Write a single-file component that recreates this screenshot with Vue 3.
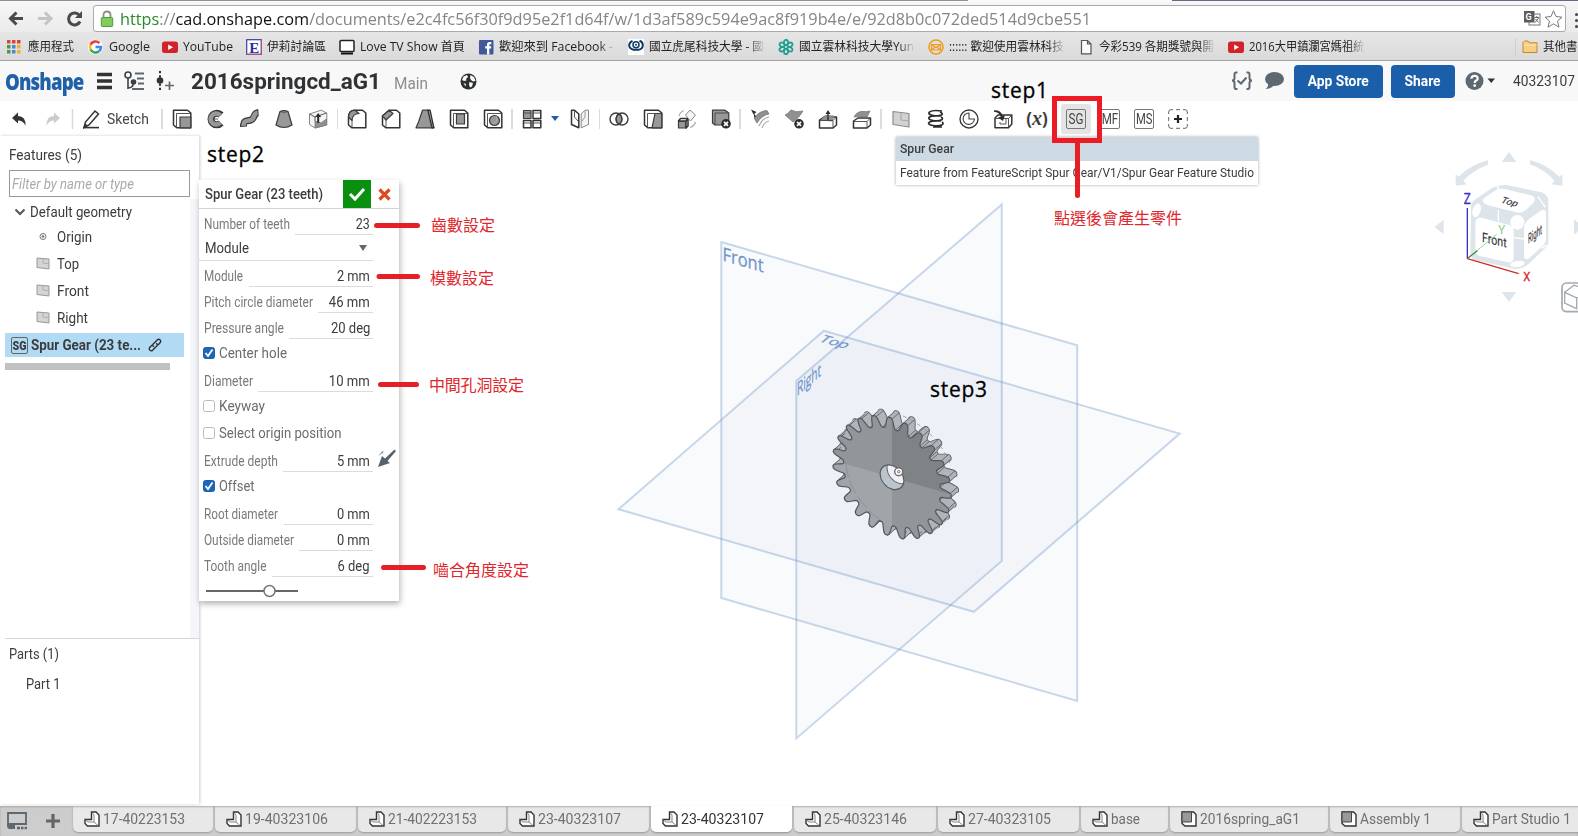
<script setup>
// Condenses or widens a label to a given width: v-fit:left, v-fit:right, or v-fit:center
const vFit = {
  mounted(el, { value, arg }) {
    if (!value) return
    const natural = el.getBoundingClientRect().width
    el.style.transformOrigin = `${arg || 'left'} center`
    el.style.transform = `scaleX(${value / natural})`
  },
}

const bookmarks = [
  { icon: 'apps', text: '應用程式', slot: 81, w: 46 },
  { icon: 'google', text: 'Google', slot: 74, w: 41 },
  { icon: 'tube', text: 'YouTube', slot: 84, w: 50 },
  { icon: 'eyny', text: '伊莉討論區', slot: 93, w: 59 },
  { icon: 'tv', text: 'Love TV Show 首頁', slot: 139, w: 105 },
  { icon: 'fb', text: '歡迎來到 Facebook -', slot: 150, w: 114, fade: true },
  { icon: 'eye', text: '國立虎尾科技大學 - 國', slot: 150, w: 115, fade: true },
  { icon: 'flower', text: '國立雲林科技大學Yun', slot: 150, w: 115, fade: true },
  { icon: 'mail', text: ':::::: 歡迎使用雲林科技', slot: 150, w: 115, fade: true },
  { icon: 'page', text: '今彩539 各期獎號與開', slot: 150, w: 115, fade: true },
  { icon: 'tube', text: '2016大甲鎮瀾宮媽祖統', slot: 150, w: 115.5, fade: true },
]

const box = ['w', 'M1.5 1.2H15.5L18.8 4V18.8H5L1.5 16Z']
const badge = [['f', 'M15 10A4.8 4.8 0 1 0 15 19.6A4.8 4.8 0 1 0 15 10Z'], ['x', 'M13 12.8L17 16.8M17 12.8L13 16.8']]
const tools = [
  { s: [box, ['k', 'M4.5 18.5V4.5H18.5'], ['g', 'M8 8H18.8V18.8H8Z']] },
  { s: [['td', 'M15 6A5.8 5.8 0 1 0 15 14'], ['tg', 'M14.2 6.3A5.5 5.5 0 1 0 14.2 13.7'], ['k', 'M8 10H12']] },
  { s: [['td', 'M3.5 17.8C3 11 7 12 11 11S13 4 18.5 3.6'], ['tg', 'M3.6 16.8C3.4 11 7 12 11 11S13 4 17.6 3.7']] },
  { s: [['g', 'M6 2.5Q10 .5 14 2.5L18 16Q10 21 2 16Z'], ['k', 'M6 2.5Q10 4 14 2.5']] },
  { s: [['wl', 'M1.5 5L13 1.2L18.8 4V16L7 19L1.5 15.5Z'], ['gl', 'M7 12L13 14L18.5 10V16L7 19Z'], ['k', 'M1.5 5L7 8L18.5 4M7 8V12'], ['f', 'M9.2 14V8H7.2L10.2 4L13.2 8H11.2V14Z']] },
  { sep: 1 },
  { s: [['w', 'M1.5 8Q2 1.2 8 1.2H15.5L18.8 4V18.8H5L1.5 16Z'], ['g', 'M1.5 8Q2 1.2 8 1.2L12 4.5Q5.5 4.5 5 11.5Z'], ['k', 'M5 18.5V11']] },
  { s: [['w', 'M1.5 7L8 1.2H15.5L18.8 4V18.8H5L1.5 16Z'], ['g', 'M1.5 7L8 1.2L12 4.5L5 11Z'], ['k', 'M5 18.5V11']] },
  { s: [['g', 'M7.5 1.2H13L18.8 18.8H1L3.5 13Z'], ['w', 'M13 1.2H15L18.8 18.8H17Z']] },
  { s: [box, ['k', 'M4.5 18.5V4.5H18.5'], ['g', 'M7.5 5H15.5V15H7.5Z']] },
  { s: [box, ['k', 'M4.5 18.5V4.5H18.5'], ['g', 'M11.5 6.5A5 5 0 1 0 11.5 16.5A5 5 0 1 0 11.5 6.5Z'], ['l', 'M13 7.5A4 4 0 0 1 9 14']] },
  { sep: 1 },
  { s: [['g', 'M1.5 1.5H9V9.5H1.5Z'], ['w', 'M11 1.5H18.8V9.5H11ZM1.5 11.5H9V18.8H1.5ZM11 11.5H18.8V18.8H11Z'], ['k', 'M1.5 4H9M11 4H18.8M1.5 14H9M11 14H18.8']] },
  { caret: 1 },
  { s: [['w', 'M1.5 1.2H4.5L8.8 5V18.8L1.5 15.5Z'], ['k', 'M4.5 1.2V8L8.8 13'], ['wl', 'M18.5 1.2H15L11.2 5V18.8L18.5 15.5Z'], ['l', 'M15 1.2V8L11.2 13']] },
  { sep: 1 },
  { s: [['n', 'M7 4A6 6 0 1 0 7 16A6 6 0 1 0 7 4Z'], ['n', 'M13 4A6 6 0 1 0 13 16A6 6 0 1 0 13 4Z'], ['g', 'M10 4.9A6 6 0 0 1 10 15.1A6 6 0 0 1 10 4.9Z']] },
  { s: [box, ['g', 'M12 4.5H18.8V18.8H9Z'], ['k', 'M4.5 18.5V4.5H18.5']] },
  { s: [['g', 'M1.5 12H9V19H1.5Z'], ['w', 'M1.5 12L3.5 9.5H11L9 12ZM11 9.5V17L9 19V12Z'], ['wl', 'M13 1L18.5 6L13.5 12L8.5 6Z'], ['l', 'M2 7A8 8 0 0 1 7 1.5M18.5 13A8 8 0 0 1 13 18.5']] },
  { s: [['g', 'M1.5 1.2H14L17.8 4V16H4L1.5 14Z'], ['k', 'M4 16V4H17'], ...badge] },
  { sep: 1 },
  { s: [['gl', 'M4 9Q9 2 17 1.5L19 5Q12 6 7 14Z'], ['l', 'M9 17Q12 9 19 8M12 19Q14 13 19 12'], ['f', 'M1 .5L6.5 3L3.5 5.5ZM4 4L6 8L4 8Z']] },
  { s: [['gl', 'M1 6Q5 4 7 1Q12 4 19 2Q15 9 9 13Z'], ...badge] },
  { s: [['w', 'M1.5 11L6 8H18.5V16L15 19H1.5Z'], ['gl', 'M3 11L7 6.500L16 7L14 12Z'], ['k', 'M1.5 11.5H15V19M15 11.5L18.5 8'], ['f', 'M9.3 11V5H7.5L10 1L12.5 5H10.7V11Z']] },
  { s: [['w', 'M1.5 12L6 9H18.5V16L15 19H1.5Z'], ['gl', 'M2 8Q5 2 11 2.5Q15 3 18 2L15 8Q10 8 6 7.5Z'], ['k', 'M1.5 12.5H15V19M15 12.5L18.5 9']] },
  { sep: 1 },
  { s: [['p', 'M2 2.5L18 4.5V18L2 15.5Z'], ['l', 'M10 4V11L18 12']] },
  { s: [['h', 'M17 2C4 0 0 5 8 6.5S20 5 15 3M16 7C2 6 1 10 8 11.5S20 10 16 8M16 12C3 11 0 15 8 16.5S20 15 17 13M8 18H17']] },
  { s: [['n', 'M10 1A9 9 0 1 0 10 19A9 9 0 1 0 10 1Z'], ['c', 'M10 4V10H15.5A5.7 5.7 0 1 1 10 4Z']] },
  { s: [['w', 'M2 9L5 6H18.8V15L15.5 18.8H2Z'], ['k', 'M2 9.5H15.5V18.5M15.5 9.5L18.8 6'], ['k', 'M7 13V15H13V10'], ['f', 'M1 1.2Q8.500 1 9.500 7L12 6L10 12L5 8.500L7.8 7.8Q6.500 3.5 1 2.8Z']] },
  { fx: 1 },
]
const studios = ['SG', 'MF', 'MS']

const planeRows = ['Top', 'Front', 'Right']

const fields = [
  { label: 'Number of teeth', lw: 86, value: '23', vw: 14, line: 78 },
  { select: 'Module' },
  { label: 'Module', lw: 39, value: '2 mm', vw: 33, line: 124 },
  { label: 'Pitch circle diameter', lw: 109, value: '46 mm', vw: 41, line: 55 },
  { label: 'Pressure angle', lw: 80, value: '20 deg', vw: 39.5, line: 84 },
  { check: 'Center hole', lw: 68, on: true, h: 27 },
  { label: 'Diameter', lw: 49, value: '10 mm', vw: 41, line: 115 },
  { check: 'Keyway', lw: 46, on: false, h: 27 },
  { check: 'Select origin position', lw: 122.5, on: false, h: 27 },
  { label: 'Extrude depth', lw: 74, value: '5 mm', vw: 33, line: 90, flip: true },
  { check: 'Offset', lw: 35.5, on: true, h: 27 },
  { label: 'Root diameter', lw: 74, value: '0 mm', vw: 33, line: 89 },
  { label: 'Outside diameter', lw: 90, value: '0 mm', vw: 33, line: 74 },
  { label: 'Tooth angle', lw: 62.5, value: '6 deg', vw: 32, line: 101 },
]

const tabs = [
  { text: '17-40223153', slot: 142, w: 82 },
  { text: '19-40323106', slot: 143, w: 83 },
  { text: '21-402223153', slot: 150, w: 89 },
  { text: '23-40323107', slot: 143, w: 83 },
  { text: '23-40323107', slot: 143, w: 83, active: true },
  { text: '25-40323146', slot: 144, w: 83 },
  { text: '27-40323105', slot: 143, w: 83 },
  { text: 'base', slot: 89, w: 29 },
  { text: '2016spring_aG1', slot: 160, w: 100, asm: true },
  { text: 'Assembly 1', slot: 132, w: 71, asm: true },
  { text: 'Part Studio 1', slot: 140, w: 79 },
]

// Gear: 23 teeth drawn on the Front plane and extruded along its normal
const cx = 892
const cy = 477.3
const dx = 6.85
const dy = -5.95
const profile = [[-6.5, 48.4], [-5, 50], [-4.1, 53], [-3.2, 56], [-2.3, 58.2], [-1, 59.3], [1, 59.3], [2.3, 58.2], [3.2, 56], [4.1, 53], [5, 50], [6.5, 48.4]]
const pts = []
const ridges = []
for (let i = 0; i < 23; i++) {
  const mid = 79.8 + (i * 360) / 23
  profile.forEach(([a, r], j) => {
    const t = ((mid + a) * Math.PI) / 180
    const p = [cx + r * Math.cos(t), cy + r * (0.291 * Math.cos(t) + Math.sin(t))]
    pts.push(p)
    if (j === 0 || j === 4 || j === 7 || j === 11) ridges.push(p)
  })
}
const f = (n) => n.toFixed(1)
const face = pts.map((p) => `${f(p[0])},${f(p[1])}`).join(' ')
const back = pts.map((p) => `${f(p[0] + dx)},${f(p[1] + dy)}`).join(' ')
const walls = pts.map((p, i) => {
  const q = pts[(i + 1) % pts.length]
  return `${f(p[0])},${f(p[1])} ${f(q[0])},${f(q[1])} ${f(q[0] + dx)},${f(q[1] + dy)} ${f(p[0] + dx)},${f(p[1] + dy)}`
})
const ridgePath = ridges.map((p) => `M${f(p[0])} ${f(p[1])}l${dx} ${dy}`).join('')
</script>

<template>
  <div class="screen">
    <div class="tabstrip"><i class="ts-a"></i><i class="ts-b"></i><i class="ts-c"></i></div>
    <div class="nav">
      <svg class="nav-icons" viewBox="0 0 93 30" width="93" height="30">
        <path d="M23 15.5H11M16.5 9.5L10.5 15.5L16.5 21.5" class="arr" />
        <path d="M38 15.5H50M45 9.5L51 15.5L45 21.5" class="arr off" />
        <path d="M79.5 12.5A6 6 0 1 0 80 18.5" class="arr" />
        <path d="M82 8V15H75Z" fill="#4a4a4a" />
      </svg>
      <div class="address">
        <svg width="14" height="18" viewBox="0 0 14 18" class="lock">
          <path d="M3.5 8V5Q3.5 1.5 7 1.5T10.5 5V8" fill="none" stroke="#8a8f8a" stroke-width="1.8" />
          <rect x="1.3" y="7.5" width="11.4" height="9" rx="1" fill="#7fcd5d" stroke="#4c9a3c" />
        </svg>
        <div class="url-slot"><span v-fit="971" class="url"><b>https</b>://<em>cad.onshape.com</em>/documents/e2c4fc56f30f9d95e2f1d64f/w/1d3af589c594e9ac8f919b4e/e/92d8b0c072ded514d9cbe551</span></div>
        <svg width="42" height="20" viewBox="0 0 42 20" class="addr-icons">
          <rect x="6" y="5" width="11" height="11" fill="#fff" stroke="#777" />
          <rect x="1" y="2" width="10.500" height="11.500" fill="#5c5c5c" />
          <text x="2.500" y="11" font-size="9" font-weight="700" fill="#fff" font-family="Roboto, sans-serif">G</text>
          <path d="M11.500 8.500H16M13.800 7V8.500M12 13.500L15.500 9M12.500 10L15.500 13.500" stroke="#666" fill="none" />
          <path d="M30.500 1.800L33 7.500L39 8.200L34.500 12L36 18.200L30.500 14.800L25 18.200L26.500 12L22 8.200L28 7.500Z" fill="#fff" stroke="#777" />
        </svg>
      </div>
      <div class="dots"><i></i><i></i><i></i></div>
    </div>

    <div class="bookmarks">
      <div v-for="(b, i) in bookmarks" :key="i" class="bm" :style="{ width: b.slot + 'px' }">
        <svg width="16" height="16" viewBox="0 0 16 16">
          <g v-if="b.icon === 'apps'">
            <path d="M0 1h3.500v3.500H0zM5 1h3.500v3.500H5zM10 1h3.500v3.500H10z" fill="#dc4437" />
            <path d="M0 6h3.500v3.500H0z" fill="#3f9b50" /><path d="M5 6h3.500v3.500H5zM5 11h3.500v3.500H5z" fill="#4a87d8" /><path d="M10 6h3.500v3.500H10zM10 11h3.500v3.500H10z" fill="#eeb32b" /><path d="M0 11h3.500v3.500H0z" fill="#3f9b50" />
          </g>
          <g v-else-if="b.icon === 'google'">
            <circle cx="7.500" cy="8" r="7.600" fill="#fff" />
            <g fill="none" stroke-width="2.600">
              <path d="M11.500 4.200A5.500 5.500 0 0 0 2.500 5.800" stroke="#ea4335" /><path d="M2.500 5.800A5.500 5.500 0 0 0 2.600 10.500" stroke="#fbbc05" /><path d="M2.600 10.500A5.500 5.500 0 0 0 11 12.300" stroke="#34a853" /><path d="M11 12.300A5.500 5.500 0 0 0 13 8H7.500" stroke="#4285f4" />
            </g>
          </g>
          <g v-else-if="b.icon === 'tube'"><rect y="2.500" width="16" height="11.500" rx="2.500" fill="#d2232a" /><path d="M6.200 5.500V11L11 8.200Z" fill="#fff" /></g>
          <g v-else-if="b.icon === 'eyny'"><rect x=".7" y=".7" width="14.600" height="14.600" fill="#fff" stroke="#3d3f9c" stroke-width="1.200" /><path d="M15.300 1V15.300H1" stroke="#c8507a" fill="none" /><text x="3.200" y="13.500" font-size="15" font-weight="700" fill="#2b2f9a" font-family="Liberation Serif, serif">E</text></g>
          <g v-else-if="b.icon === 'tv'"><rect x="1" y="1.500" width="14" height="11" rx="1" fill="#fff" stroke="#222" stroke-width="1.500" /><path d="M2 14.500H14" stroke="#111" stroke-width="2" /></g>
          <g v-else-if="b.icon === 'fb'"><rect x="1" y="1" width="14.500" height="14.500" rx="1" fill="#41599b" /><path d="M9 15.500V9.500H7.200V7.300H9V5.500Q9 3 11.500 3H13.300V5.200H12Q11.300 5.200 11.300 6V7.300H13.300L13 9.500H11.300V15.500Z" fill="#fff" /></g>
          <g v-else-if="b.icon === 'eye'"><rect width="16" height="16" fill="#fff" /><path d="M4.500 1.800Q1 3.500 1.200 6.500T5.500 10.800H10.500Q14.600 10 14.800 6.500T11.500 1.800" fill="none" stroke="#0d3a66" stroke-width="2" /><circle cx="8" cy="5.800" r="3" fill="none" stroke="#0d3a66" stroke-width="1.500" /><circle cx="8" cy="5.800" r="1" fill="#0d3a66" /></g>
          <g v-else-if="b.icon === 'flower'" fill="none" stroke="#1fa08e" stroke-width="1.800"><ellipse v-for="n in 6" :key="n" cx="8" cy="3.500" rx="2.100" ry="2.700" :transform="`rotate(${n * 60} 8 8)`" /></g>
          <g v-else-if="b.icon === 'mail'" fill="none" stroke="#f09a1d" stroke-width="1.500"><circle cx="8" cy="8" r="7" /><path d="M3.500 5.500H12.500V11H3.500ZM3.500 5.500L8 8.500L12.500 5.500M3.500 11L7 8M12.500 11L9 8" stroke-width="1.200" /></g>
          <g v-else><path d="M3.500 1.500H9.500L13 5V14.800H3.500ZM9.500 1.500V5H13" fill="#fafafa" stroke="#555" stroke-width="1.200" /></g>
        </svg>
        <div class="bm-clip" :class="{ fade: b.fade }"><span v-fit="b.w">{{ b.text }}</span></div>
      </div>
      <div class="bm-other">
        <svg width="16" height="14" viewBox="0 0 16 14"><path d="M1 12.500V2.500L2.500 1H6L7.500 2.800H15V12.500Z" fill="#f8cf80" stroke="#b98a35" /><path d="M1.500 5H14.500" stroke="#fde7b5" /></svg>
        <span v-fit="34.500">其他書</span>
      </div>
    </div>

    <header class="header">
      <div class="logo"><span v-fit="78.500">Onshape</span></div>
      <svg class="head-icons" width="100" height="24" viewBox="0 0 100 24">
        <path d="M0 5.500H15M0 12H15M0 18.500H15" stroke="#333" stroke-width="3.300" />
        <g fill="none" stroke="#3c4043" stroke-width="1.600"><circle cx="31" cy="6" r="3" /><circle cx="36.500" cy="13" r="2" fill="#3c4043" /><path d="M31 9V20M31 19Q36 19 36.500 14" /></g>
        <path d="M38 4.500H47M40 9.500H47M41 14.500H47M35 20H47" stroke="#5d6870" stroke-width="1.800" />
        <path d="M63 2V22" stroke="#333" stroke-width="2" stroke-dasharray="2.200 2" /><circle cx="63" cy="11.500" r="3.300" fill="#333" /><path d="M68 16.500H77M72.500 12.500V21" stroke="#5d6870" stroke-width="1.700" />
      </svg>
      <div class="title"><span v-fit="190">2016springcd_aG1</span></div>
      <div class="branch"><span v-fit="34">Main</span></div>
      <svg class="globe" width="17" height="17" viewBox="0 0 17 17"><circle cx="8.500" cy="8.500" r="8" fill="#2d3033" /><path d="M3.500 3.500L7 2L8 4L6 6L6.500 7.500L4 8L2 7ZM10.500 2L14 4L15.500 8L13 8.500L11 7L10 5ZM9.500 9L13 10L12 13.500L10 14.500L9 11.500ZM3.500 10L6 11L5.500 13.500Z" fill="#f8f8f8" /></svg>
      <div class="head-right">
        <svg width="54" height="22" viewBox="0 0 54 22">
          <path d="M6.500 2.500H5Q3.500 2.500 3.500 4.500V8Q3.500 10.500 1 10.500Q3.500 10.500 3.500 13V17Q3.500 19 5 19H6.500M15.500 2.500H17Q18.500 2.500 18.500 4.500V8Q18.500 10.500 21 10.500Q18.500 10.500 18.500 13V17Q18.500 19 17 19H15.500" fill="none" stroke="#5d6870" stroke-width="2" /><path d="M6.500 10.500L10 13.500L15.500 7.500" fill="none" stroke="#5d6870" stroke-width="2" />
          <ellipse cx="43.500" cy="9" rx="9.500" ry="7" fill="#5d6870" /><path d="M37 13Q38 17 34.500 19Q40 19 43 15Z" fill="#5d6870" />
        </svg>
        <button class="btn app"><span v-fit:center="61">App Store</span></button>
        <button class="btn share"><span v-fit:center="36">Share</span></button>
        <svg class="help" width="31" height="20" viewBox="0 0 31 20"><circle cx="9.500" cy="10" r="9" fill="#5d6870" /><path d="M6.300 7.800Q6.500 4.800 9.600 4.800T12.700 7.500Q12.700 9 10.800 9.800Q9.700 10.400 9.700 12" fill="none" stroke="#fff" stroke-width="2.200" /><circle cx="9.700" cy="14.600" r="1.400" fill="#fff" /><path d="M22.500 7.500H30L26.300 12Z" fill="#333" /></svg>
        <div class="user"><span v-fit="62">40323107</span></div>
      </div>
    </header>

    <div class="toolbar">
      <svg width="78" height="30" viewBox="0 0 78 30" class="undo">
        <path d="M12 14L18 8.500V12Q26 12 25.500 22Q23.500 16.500 18 16.500V19.500Z" fill="#333" />
        <path d="M60 14L54 8.500V12Q46 12 46.500 22Q48.500 16.500 54 16.500V19.500Z" fill="#ccc" />
        <path d="M72.500 5V25" stroke="#d8d8d8" stroke-width="1.500" />
      </svg>
      <svg width="24" height="20" viewBox="0 0 24 20"><path d="M6 18.500L7.500 13L17 2L20.500 5L11 16Z" fill="#fff" stroke="#333" stroke-width="1.500" /><path d="M5 18.600H21" stroke="#333" stroke-width="1.600" /><path d="M6 18.500L7.500 14.500L9.500 16.500Z" fill="#333" /></svg>
      <div class="sketch"><span v-fit="42">Sketch</span></div>
      <i class="sep"></i>
      <template v-for="(t, i) in tools" :key="i">
        <i v-if="t.sep" class="sep"></i>
        <i v-else-if="t.caret" class="caret"></i>
        <div v-else-if="t.fx" class="tool fx">(<em>x</em>)</div>
        <div v-else class="tool">
          <svg width="20" height="20" viewBox="0 0 20 20"><path v-for="(p, j) in t.s" :key="j" :class="'s-' + p[0]" :d="p[1]" /></svg>
        </div>
      </template>
      <div class="customs">
        <div v-for="(s, i) in studios" :key="s" class="tool" :class="{ hover: i === 0 }"><b class="feat"><span v-fit:center="s === 'SG' ? 15 : 16.500">{{ s }}</span></b></div>
        <div class="tool"><svg width="20" height="20" viewBox="0 0 20 20"><path d="M.7 5V3Q.7 .7 3 .7H5M8 .7H12M15 .7H17Q19.300 .7 19.300 3V5M19.300 8V12M19.300 15V17Q19.300 19.300 17 19.300H15M12 19.300H8M5 19.300H3Q.7 19.300 .7 17V15M.7 12V8" fill="none" stroke="#666" /><path d="M6 10H14M10 6V14" stroke="#222" stroke-width="2.200" /></svg></div>
      </div>
    </div>

    <main class="work">
      <aside class="side">
        <div class="side-main">
          <div class="side-title"><span v-fit="73">Features (5)</span></div>
          <div class="filter"><span v-fit="122">Filter by name or type</span></div>
          <div class="tree-head">
            <svg width="12" height="8" viewBox="0 0 12 8"><path d="M1.500 1.500L6 6L10.500 1.500" fill="none" stroke="#555" stroke-width="2" /></svg>
            <span v-fit="102">Default geometry</span>
          </div>
          <div class="tree-row"><svg width="14" height="14" viewBox="0 0 14 14"><circle cx="7" cy="6.500" r="3" fill="none" stroke="#777" /><circle cx="7" cy="6.500" r="1.300" fill="#777" /></svg><span v-fit="35">Origin</span></div>
          <div v-for="(p, i) in planeRows" :key="p" class="tree-row">
            <svg width="14" height="13" viewBox="0 0 14 13"><path d="M1 1L13 2V12L1 10.500Z" fill="#d4d4d4" stroke="#999" /><path d="M7 1.500V6L13 6.800" fill="none" stroke="#b0b0b0" /></svg>
            <span v-fit="[22, 32, 31][i]">{{ p }}</span>
          </div>
          <div class="tree-sel">
            <b class="mini"><span v-fit:center="14">SG</span></b>
            <div class="sel-text"><span v-fit="110">Spur Gear (23 te...</span></div>
            <svg width="14" height="14" viewBox="0 0 14 14" fill="none" stroke="#333" stroke-width="1.400" stroke-linejoin="round"><path d="M5.800 8.800L4.600 7.600Q4.500 6.800 5.200 6L9.500 1.700Q10.800 .8 12.200 2Q13.200 3.300 12.300 4.600L10 7" /><path d="M8.200 5.200L9.400 6.400Q9.500 7.200 8.800 8L4.500 12.300Q3.200 13.200 1.800 12Q.8 10.700 1.700 9.400L4 7" /></svg>
          </div>
          <div class="rollbar"></div>
        </div>
        <div class="parts">
          <div class="side-title"><span v-fit="50">Parts (1)</span></div>
          <div class="part"><span v-fit="34.500">Part 1</span></div>
        </div>
      </aside>

      <section class="dialog">
        <div class="dlg-head">
          <div class="dlg-title"><span v-fit="118">Spur Gear (23 teeth)</span></div>
          <div class="ok"><svg width="18" height="16" viewBox="0 0 18 16"><path d="M2 8L7 13L16 3" fill="none" stroke="#fff" stroke-width="3" /></svg></div>
          <svg class="cancel" width="13" height="13" viewBox="0 0 13 13"><path d="M1.500 1.500L11.500 11.500M11.500 1.500L1.500 11.500" stroke="#dc4a22" stroke-width="3.200" /></svg>
        </div>
        <template v-for="(r, i) in fields" :key="i">
          <div v-if="r.select" class="select"><span v-fit="44">{{ r.select }}</span><i></i></div>
          <div v-else-if="r.check" class="check" :style="{ height: r.h + 'px' }">
            <svg width="12" height="12" viewBox="0 0 12 12"><rect x=".5" y=".5" width="11" height="11" rx="2" :fill="r.on ? '#1d67b8' : '#fff'" :stroke="r.on ? '#1d5fa8' : '#bbb'" /><path v-if="r.on" d="M2.500 6L5 9L9.500 2.500" fill="none" stroke="#fff" stroke-width="1.800" /></svg>
            <span v-fit="r.lw">{{ r.check }}</span>
          </div>
          <div v-else class="field">
            <div class="lab"><span v-fit="r.lw">{{ r.label }}</span></div>
            <div class="val" :style="{ width: r.line + 'px' }"><span v-fit:right="r.vw">{{ r.value }}</span></div>
            <svg v-if="r.flip" class="flip" width="20" height="20" viewBox="0 0 20 20"><path d="M1 19L5 8L8 10.500L17.500 1.500L19 3L10.500 13L13 15Z" fill="#56636c" /><path d="M1 8L6 2.500L6.500 4.500Z" fill="#8b959c" /></svg>
          </div>
        </template>
        <svg class="slider" width="100" height="24" viewBox="0 0 100 24"><path d="M3 14H95" stroke="#666" stroke-width="2" /><circle cx="66.500" cy="14" r="5.500" fill="#fff" stroke="#777" stroke-width="1.500" /></svg>
      </section>
    </main>

    <footer class="tabs">
      <div class="tab-tools">
        <svg width="72" height="30" viewBox="0 0 72 30"><path d="M8 7H26V18H8Z" fill="none" stroke="#5d6870" stroke-width="1.800" /><path d="M7 17.500H27V19H15V23H9Q7 22 7 20Z" fill="#5d6870" /><path d="M17 22H20M21 22H23.500M24.500 22H27" stroke="#5d6870" stroke-width="2.500" /><path d="M46 15H60M53 8V22" stroke="#666" stroke-width="3.200" /></svg>
      </div>
      <div v-for="(t, i) in tabs" :key="i" class="tab" :class="{ active: t.active }" :style="{ width: t.slot - 2 + 'px' }">
        <svg width="16" height="16" viewBox="0 0 16 16">
          <template v-if="t.asm"><path d="M1 1H12.500L15 3.500V15H4L1 12.500Z" fill="#fff" stroke="#333" stroke-width="1.400" /><path d="M1 1H10.500V11H1Z" fill="#999" stroke="#444" /></template>
          <template v-else><path d="M7.500 1H12L15 4V15H3.500L1 12.500V8.500H7.500Z" fill="#fff" stroke="#333" stroke-width="1.400" /><path d="M1.500 9L4 11H10V4L8 1.500M10 11L14 14.500" fill="none" stroke="#777" stroke-width=".9" /></template>
        </svg>
        <span v-fit="t.w">{{ t.text }}</span>
      </div>
    </footer>

    <svg class="scene" width="1578" height="836" viewBox="0 0 1578 836">
      <defs>
        <clipPath id="gear-face"><polygon :points="face" /></clipPath>
        <clipPath id="gear-hole"><ellipse rx="11.850" ry="11.850" transform="matrix(1 .291 0 1 892 477.300)" /></clipPath>
      </defs>
      <g class="plane">
        <path d="M721.300 242L1077.200 345.300V700.900L721.300 598Z" />
        <path d="M1001.800 204.500V560.900L796.300 738.400V380.900Z" />
        <path d="M823.900 330.700L1179.800 433.600L973.900 611.800L618.400 509.300Z" />
      </g>
      <g class="plane-names">
        <text transform="matrix(1 .291 0 1 722.500 260.500)" font-size="19" textLength="41" lengthAdjust="spacingAndGlyphs">Front</text>
        <text transform="matrix(.97 .28 -.6 .5 818 341)" font-size="17" textLength="28" lengthAdjust="spacingAndGlyphs">Top</text>
        <text transform="matrix(1 -.859 0 1 797 396)" font-size="18" textLength="24" lengthAdjust="spacingAndGlyphs">Right</text>
      </g>
      <polygon :points="back" fill="#a9b0b5" stroke="#4a5054" stroke-width="1.800" stroke-linejoin="round" />
      <polygon v-for="(w, i) in walls" :key="i" :points="w" fill="#b0b7bc" stroke="#b0b7bc" stroke-width=".3" />
      <path :d="ridgePath" stroke="#5a6064" stroke-width=".9" />
      <g clip-path="url(#gear-face)">
        <rect x="820" y="400" width="150" height="160" fill="#929699" />
        <path d="M892 477.300V400H970V500Z" fill="#7f8385" />
        <path d="M892 477.300V560H820V456.350Z" fill="#9fa5a9" />
      </g>
      <polygon :points="face" fill="none" stroke="#54595d" stroke-width="1.200" stroke-linejoin="round" />
      <path d="M846 463Q848 495 880 520" fill="none" stroke="#878d91" stroke-width=".8" stroke-dasharray="14 4" />
      <path d="M903 416Q938 432 951 466" fill="none" stroke="#8d9398" stroke-width=".8" stroke-dasharray="4 4" />
      <g clip-path="url(#gear-hole)">
        <rect x="870" y="455" width="45" height="45" fill="#bcc5cc" />
        <ellipse rx="11.850" ry="11.850" transform="matrix(1 .291 0 1 898.850 471.350)" fill="#eef1f6" stroke="#666c70" />
      </g>
      <ellipse rx="11.850" ry="11.850" transform="matrix(1 .291 0 1 892 477.300)" fill="none" stroke="#54595d" stroke-width="1.100" />
      <circle cx="898.700" cy="471.700" r="4" fill="#fff" stroke="#70686a" stroke-width="1.400" /><circle cx="898.700" cy="471.700" r="1.200" fill="none" stroke="#70686a" />
    </svg>

    <svg class="cube" width="178" height="190" viewBox="0 0 534 570">
      <g fill="#dde4ea">
        <path d="M327 66L349 96H305ZM327 515L305 486H349ZM103 291L131 270V312ZM522 268L550 291L522 314Z" />
        <path d="M264 91V104Q220 120 190 152L200 163L167 167V132L176 140Q212 104 264 91ZM390 90V103Q434 119 464 152L455 163L487 167V132L478 140Q442 104 390 90Z" />
        <path d="M213 235Q212 218 226 208L275 175Q290 166 320 165L420 186Q440 190 445 208V335Q446 345 430 360L388 400Q368 418 345 417L225 390Q212 386 211 370Z" />
      </g>
      <g fill="#fff">
        <path d="M252 204L288 180Q298 174 315 177L392 196Q412 203 400 218L378 240Q364 252 345 246L265 226Q240 218 252 204Z" />
        <path d="M226 280Q226 262 243 263L325 284Q341 288 341 303V382Q341 400 325 397L243 379Q226 375 226 360Z" />
        <path d="M372 295Q374 275 388 266L422 242Q438 234 438 250V328Q438 340 428 348L388 384Q372 394 372 376Z" />
        <ellipse cx="352" cy="277" rx="21" ry="22" /><ellipse cx="230" cy="241" rx="12" ry="21" transform="rotate(18 230 241)" /><ellipse cx="352" cy="402" rx="22" ry="9" transform="rotate(-8 352 402)" />
      </g>
      <path d="M295 240V274M340 322L372 327M414 200L436 232M290 167L300 182M425 355L440 345" stroke="#fff" stroke-width="4" />
      <g font-family="Roboto, sans-serif" fill="#333" stroke="#333" stroke-width=".4">
        <text transform="matrix(1 .24 0 1 246 335)" font-size="40" textLength="74" lengthAdjust="spacingAndGlyphs">Front</text>
        <text transform="matrix(.96 .26 -.5 .72 300 217)" font-size="32" textLength="50" lengthAdjust="spacingAndGlyphs">Top</text>
        <text transform="matrix(1 -.72 0 1 384 341)" font-size="41" textLength="42" lengthAdjust="spacingAndGlyphs">Right</text>
      </g>
      <path d="M202 386V234" stroke="#3a32c8" stroke-width="4" /><path d="M202 386L356 431" stroke="#d22b2b" stroke-width="4" /><path d="M204 384L290 313" stroke="#9ad69a" stroke-width="3" /><path d="M204 384L232 362" stroke="#2f8f2f" stroke-width="3.500" />
      <g font-family="Roboto, sans-serif" font-size="42">
        <text x="191" y="223" fill="#3a32c8" stroke="#3a32c8" textLength="21" lengthAdjust="spacingAndGlyphs">Z</text><text x="294" y="311" fill="#8fd08f" font-size="38" textLength="22" lengthAdjust="spacingAndGlyphs">Y</text><text x="370" y="452" fill="#d22b2b" stroke="#d22b2b" font-size="38" textLength="21" lengthAdjust="spacingAndGlyphs">X</text>
      </g>
      <g fill="#fff" stroke="#a3a9ae" stroke-width="5"><rect x="486" y="459" width="90" height="86" rx="14" /><path d="M494 487L522 466L560 476M494 487L530 504V536L494 519ZM530 504L560 490" stroke-width="4" /></g>
    </svg>

    <div class="tooltip">
      <div class="tt-head"><span v-fit="54">Spur Gear</span></div>
      <div class="tt-body"><span v-fit="354">Feature from FeatureScript Spur Gear/V1/Spur Gear Feature Studio</span></div>
    </div>

    <svg class="scene notes" width="1578" height="836" viewBox="0 0 1578 836">
      <rect x="1054.500" y="98.500" width="45" height="42" fill="none" stroke="#ed1c24" stroke-width="5" />
      <g stroke="#e61f27" stroke-width="5" stroke-linecap="round">
        <path d="M1077.500 143V195.500" /><path d="M376.500 225.500H417.500M379 276.500H417.500M380.500 384.500H416.500M383.500 567.500H423.500" />
      </g>
      <g class="step">
        <text x="991" y="97.500" textLength="57">step1</text><text x="207" y="161.500" textLength="57">step2</text><text x="930" y="396.500" textLength="57">step3</text>
      </g>
      <g class="zh">
        <text x="1054" y="224" textLength="128">點選後會產生零件</text>
        <text x="431" y="231" textLength="64">齒數設定</text>
        <text x="430" y="284" textLength="64">模數設定</text>
        <text x="429" y="391" textLength="95">中間孔洞設定</text>
        <text x="433" y="576" textLength="96">嚙合角度設定</text>
      </g>
    </svg>
  </div>
</template>

<style>
body { margin: 0; overflow: hidden; background: #fff; }
</style>

<style scoped>
.screen { position: relative; width: 1578px; height: 836px; display: flex; flex-direction: column; overflow: hidden; background: #fff; font-family: Roboto, "Liberation Sans", "Noto Sans CJK TC", sans-serif; color: #3c3c3c; }
.screen * { box-sizing: border-box; }
svg { display: block; flex: none; }
span { display: inline-block; white-space: nowrap; flex: none; }
i { display: block; flex: none; }
.tabstrip { display: flex; height: 2px; background: #fafafa; flex: none; }
.ts-a { width: 968px; height: 1px; background: #8f8f9b; }
.ts-b { width: 204px; }
.ts-c { width: 406px; height: 1px; background: #666a80; }
.nav { height: 30px; flex: none; display: flex; background: linear-gradient(#f6f6f6, #ebebeb); }
.nav-icons { margin-top: 1px; }
.arr { fill: none; stroke: #4a4a4a; stroke-width: 3; }
.off { stroke: #c4c4c4; }
.address { width: 1474px; height: 27px; margin-top: 3px; background: #fff; border: 1px solid #aaa; border-radius: 3px; display: flex; align-items: center; }
.lock { margin-left: 6px; }
.url-slot { width: 1403px; margin-left: 6px; padding-top: 1px; }
.url { font-family: "Open Sans", "Noto Sans", sans-serif; font-size: 16.500px; line-height: 24px; color: #858585; }
.url b { font-weight: 400; color: #2a8a2a; }
.url em { font-style: normal; color: #111; }
.dots { margin: 11px 0 0 9px; display: flex; flex-direction: column; gap: 3px; }
.dots i { width: 3px; height: 3px; background: #444; border-radius: 50%; }
.bookmarks { height: 29px; flex: none; display: flex; align-items: center; padding: 1px 0 0 7px; background: linear-gradient(#e6e6e6, #dadada); border-bottom: 1px solid #a2a2a2; font-family: "Open Sans", "Noto Sans CJK TC", sans-serif; font-size: 12px; line-height: 18px; color: #222; }
.bm { display: flex; align-items: center; gap: 5px; flex: none; }
.bm-clip { overflow: hidden; width: 120px; flex: none; }
.fade { width: 116px; mask-image: linear-gradient(90deg, #000 100px, transparent 116px); }
.bm-other { margin-left: 137px; padding-left: 6px; border-left: 1px solid #cfcfcf; display: flex; align-items: center; gap: 5px; flex: none; }

.header { height: 40px; flex: none; display: flex; align-items: center; background: #f8f8f8; }
.header > * { flex: none; }
.logo { width: 91px; padding-left: 5px; font-family: "Open Sans", sans-serif; font-weight: 800; font-size: 22px; line-height: 30px; letter-spacing: -1px; color: #1f61a9; }
.head-icons { margin-left: 6px; }
.title { margin-left: -6px; width: 203px; font-weight: 700; font-size: 22px; color: #303336; }
.branch { width: 66px; font-size: 16px; color: #8c8c8c; padding-top: 4px; }
.head-right { margin-left: 754px; display: flex; align-items: center; }
.btn { height: 33px; border: 0; border-radius: 4px; padding: 0; background: #1b5faa; color: #fff; font: 700 15px Roboto, sans-serif; display: flex; align-items: center; justify-content: center; flex: none; }
.app { width: 89px; margin-left: 9px; }
.share { width: 64px; margin-left: 8px; }
.help { margin-left: 10px; }
.user { margin-left: 17px; font-size: 15px; }

.toolbar { height: 35px; flex: none; display: flex; align-items: center; background: #fff; }
.sketch { width: 57px; margin-left: 5px; font-size: 15px; color: #444; }
.sep { width: 5px; height: 20px; background: linear-gradient(90deg, transparent 1.500px, #dcdcdc 1.500px 3px, transparent 3px); }
.sketch + .sep { margin-left: -4px; }
.tool { width: 34px; height: 30px; flex: none; display: flex; align-items: center; justify-content: center; }
.caret { width: 14px; display: flex; padding-left: 2px; }
.caret::after { content: ""; border: 4px solid transparent; border-top: 5px solid #1d5fa8; border-bottom: 0; }
.tool path { stroke-linejoin: round; }
.s-k { fill: none; stroke: #444; stroke-width: .9; }
.s-w { fill: #fff; stroke: #333; stroke-width: 1.500; }
.s-g { fill: #989898; stroke: #3c3c3c; stroke-width: 1.200; }
.s-f { fill: #2c2c2c; }
.s-x { fill: none; stroke: #fff; stroke-width: 1.700; }
.s-l { fill: none; stroke: #aaa; stroke-width: 1.200; }
.s-wl { fill: #f4f4f4; stroke: #888; stroke-width: 1; }
.s-gl { fill: #909090; stroke: #777; stroke-width: .8; }
.s-p { fill: #d2d2d2; stroke: #8c8c8c; stroke-width: 1.200; }
.s-n { fill: none; stroke: #3c3c3c; stroke-width: 1.400; }
.s-c { fill: none; stroke: #444; stroke-width: 1.100; }
.s-h { fill: none; stroke: #2c2c2c; stroke-width: 1.700; }
.s-td { fill: none; stroke: #3a3a3a; stroke-width: 7; }
.s-tg { fill: none; stroke: #989898; stroke-width: 4.600; }
.fx { font: 700 17px "Open Sans", sans-serif; }
.fx em { font-family: "Liberation Serif", serif; font-size: 20px; }
.customs { display: flex; margin-left: 5px; }
.hover { position: relative; }
.hover::before { content: ""; position: absolute; left: 2px; top: 0; width: 30px; height: 30px; background: #e4e4e4; border-radius: 3px; }
.feat { position: relative; width: 20px; height: 20px; border: 1px solid #777; border-radius: 2px; font-weight: 400; font-size: 14px; line-height: 18px; display: flex; justify-content: center; color: #444; }

.work { flex: 1; display: flex; align-items: flex-start; min-height: 0; font-size: 14px; line-height: 20px; }
.side { width: 199px; height: 668px; background: linear-gradient(#fff, #fff) 0 0 / 199px 63px no-repeat, linear-gradient(90deg, #fff 190px, #f4f6f9 190px); box-shadow: 1px 0 3px rgba(0, 0, 0, .2); display: flex; flex-direction: column; }
.side-main { height: 502px; padding-top: 1px; }
.side-title { height: 33px; padding: 8px 0 0 9px; }
.filter { width: 181px; height: 27px; margin-left: 9px; border: 1px solid #999; background: #fff; padding: 3px 2px; font-style: italic; color: #aaa; }
.tree-head { display: flex; align-items: center; height: 30px; padding-left: 14px; gap: 4px; }
.tree-row { display: flex; align-items: center; height: 27px; padding-left: 36px; gap: 7px; }
.tree-head + .tree-row { height: 21px; margin: -.6px 0 3px; }
.tree-sel { width: 179px; height: 24px; margin: 1.600px 0 0 5px; background: #b1dbf4; display: flex; align-items: center; padding-left: 6px; font-weight: 700; }
.mini { width: 17px; height: 17px; border: 1px solid #666; border-radius: 2px; font-size: 13px; line-height: 15px; display: flex; justify-content: center; }
.sel-text { width: 117px; margin-left: 3px; }
.rollbar { width: 165px; height: 7px; margin: 6px 0 0 5px; background: #c1c1c1; }
.parts { flex: 1; margin-left: 5px; border-top: 1px solid #d5d8db; background: #fff; }
.parts .side-title { padding: 5px 0 0 4px; height: 35px; }
.part { padding-left: 21px; }

.dialog { position: relative; z-index: 2; width: 200px; height: 421px; margin-top: 44px; background: #fff; box-shadow: 1px 3px 6px rgba(0, 0, 0, .3); }
.dlg-head { height: 29px; display: flex; border-bottom: 1px solid #cfd4d8; }
.dlg-title { width: 144px; padding: 4px 0 0 6px; font-weight: 500; }
.ok { width: 28px; height: 28px; background: #0a9010; display: flex; align-items: center; justify-content: center; }
.cancel { margin: 8px 0 0 7px; }
.field { position: relative; height: 26px; width: 174px; display: flex; padding-left: 5px; }
.lab { flex: 1; min-width: 0; color: #7a7a7a; padding-top: 5px; }
.val { border-bottom: 1px solid #d8dcdf; padding: 5px 3px 0 0; flex: none; display: flex; justify-content: flex-end; height: 26px; }
.flip { position: absolute; left: 178px; top: 2px; }
.select { height: 26px; width: 174px; border-bottom: 1px solid #d8dcdf; padding: 3px 6px 0 6px; display: flex; justify-content: space-between; }
.select i { margin-top: 7px; width: 0; height: 0; border: 4.500px solid transparent; border-top: 6px solid #666; border-bottom: 0; }
.check { display: flex; align-items: center; padding: 1px 0 0 4px; gap: 4px; color: #6c6c6c; }
.slider { margin-left: 4px; }

.tabs { height: 30px; flex: none; display: flex; background: #cdcdcd; box-shadow: inset 0 1px 2px rgba(0, 0, 0, .2); }
.tab-tools { width: 73px; flex: none; }
.tab { height: 26px; margin-right: 2px; flex: none; display: flex; align-items: center; gap: 3px; padding-left: 11px; background: #e8e8e8; border-radius: 0 0 5px 5px; box-shadow: 0 1px 2px rgba(0, 0, 0, .25), inset 0 2px 2px -1px rgba(0, 0, 0, .25); font-size: 15px; color: #707070; }
.tab.active { background: #fff; box-shadow: 0 1px 2px rgba(0, 0, 0, .3); color: #333; }

.scene { position: absolute; left: 0; top: 0; pointer-events: none; }
.notes { z-index: 5; }
.plane path { fill: rgba(105, 145, 188, .045); stroke: rgba(105, 150, 200, .36); stroke-width: 2; }
.plane-names { fill: #7095cc; stroke: #7095cc; stroke-width: .3; font-family: "Open Sans", sans-serif; }
.cube { position: absolute; left: 1400px; top: 130px; }
.tooltip { position: absolute; z-index: 3; left: 896px; top: 137px; width: 362px; height: 48px; background: #fff; box-shadow: 0 0 3px rgba(0, 0, 0, .35); font-size: 13.500px; line-height: 23px; }
.tt-head { height: 24px; padding-left: 4px; background: #cdd9e3; font-weight: 500; }
.tt-body { padding-left: 4px; }
.step { font: 21px "Open Sans", "Noto Sans", sans-serif; fill: #000; stroke: #000; stroke-width: .3; }
.zh { font: 16px "Noto Sans CJK TC", sans-serif; fill: #e0262c; }
</style>
